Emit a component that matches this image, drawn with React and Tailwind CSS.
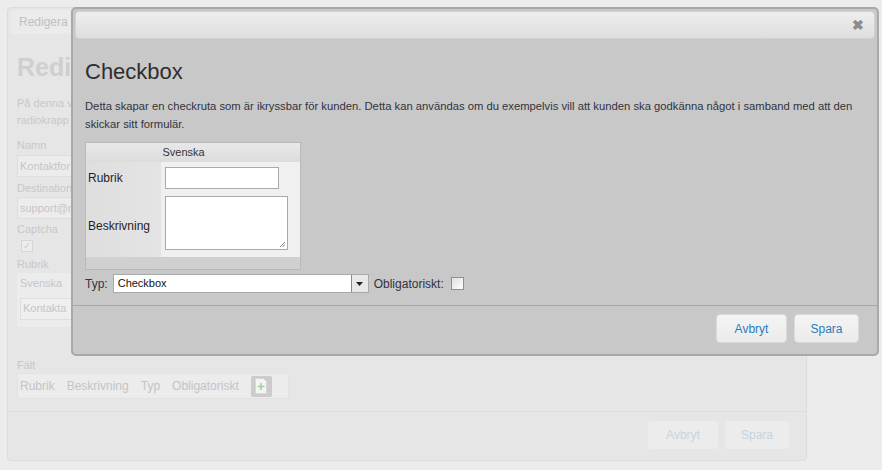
import React from "react";

const font = { fontFamily: '"Liberation Sans", Arial, sans-serif' };

function PlusDoc() {
  return (
    <svg width="12" height="16" viewBox="0 0 12 16">
      <path d="M0.5 0.5h8l3 3v12h-11z" fill="#f4f4f4" stroke="#d6d6d6" />
      <path d="M6 5v7M2.5 8.5h7" stroke="#9fd19f" strokeWidth="1.6" />
    </svg>
  );
}

const Background = () => (
  <div className="absolute left-[7px] top-[7px] w-[800px] h-[454px] bg-[#e6e6e6] border border-[#dcdcdc] rounded-[4px] flex flex-col">
    <div className="mx-[3px] mt-[2px] h-[24px] w-[62px] bg-[#ebebeb] rounded-[4px] px-[8px] flex items-center text-[12px] text-[#c0c0c0] whitespace-nowrap overflow-hidden">
      Redigera f
    </div>
    <div className="px-[9px] pt-[18px] flex flex-col">
      <h1 className="text-[25px] font-bold text-[#cfcfcf] leading-[30px] w-[56px] overflow-hidden whitespace-nowrap">Redig</h1>
      <p className="mt-[13px] text-[11px] leading-[17px] text-[#c8c8c8] w-[55px] overflow-hidden whitespace-nowrap">
        På denna v
        <br />
        radiokrapp
      </p>
      <div className="mt-[10px] text-[11px] text-[#c8c8c8] leading-[13px]">Namn</div>
      <div className="mt-[3px] w-[55px] h-[22px] bg-[#ececec] border border-[#dedede] px-[2px] flex items-center text-[11px] text-[#c6c6c6] overflow-hidden whitespace-nowrap">Kontaktfor</div>
      <div className="mt-[5px] text-[11px] text-[#c8c8c8] leading-[13px] w-[55px] overflow-hidden whitespace-nowrap">Destination</div>
      <div className="mt-[2px] w-[55px] h-[22px] bg-[#ececec] border border-[#dedede] px-[2px] flex items-center text-[11px] text-[#c6c6c6] overflow-hidden whitespace-nowrap">support@m</div>
      <div className="mt-[4px] text-[11px] text-[#c8c8c8] leading-[13px]">Captcha</div>
      <div className="mt-[4px] ml-[4px] w-[12px] h-[12px] border border-[#d6d6d6] bg-[#ececec] flex items-center justify-center text-[10px] leading-none text-[#d0d0d0]">✓</div>
      <div className="mt-[6px] text-[11px] text-[#c8c8c8] leading-[13px]">Rubrik</div>
      <div className="mt-[2px] w-[55px] h-[54px] bg-[#ececec] px-[3px] pt-[2px] text-[11px] text-[#c6c6c6]">
        <div>Svenska</div>
        <div className="mt-[6px] w-[52px] h-[22px] bg-[#efefef] border border-[#dedede] px-[2px] flex items-center overflow-hidden whitespace-nowrap">Kontakta</div>
      </div>
      <div className="mt-[32px] text-[11px] text-[#c8c8c8] leading-[13px]">Fält</div>
      <div className="mt-[1px] w-[272px] h-[26px] bg-[#ececec] border border-[#e2e2e2] flex items-center gap-[12px] px-[2px] text-[12px] text-[#c4c4c4]">
        <span>Rubrik</span>
        <span>Beskrivning</span>
        <span>Typ</span>
        <span>Obligatoriskt</span>
        <span className="w-[21px] h-[21px] bg-[#cccccc] rounded-[2px] flex items-center justify-center">
          <PlusDoc />
        </span>
      </div>
    </div>
    <div className="mt-[12px] border-t border-[#dedede]" />
    <div className="flex justify-end gap-[7px] pr-[17px] pt-[9px]">
      <div className="w-[70px] h-[28px] rounded-[4px] bg-[#ececec] flex items-center justify-center text-[12px] text-[#c6d4e2]">Avbryt</div>
      <div className="w-[64px] h-[28px] rounded-[4px] bg-[#ececec] flex items-center justify-center text-[12px] text-[#c6d4e2]">Spara</div>
    </div>
  </div>
);

const Modal = () => (
  <div className="absolute left-[71px] top-[7px] w-[808px] h-[349px] bg-[#c8c8c8] border-2 border-[#a9a9a9] rounded-[5px] flex flex-col">
    <div className="mx-[2px] mt-[2px] h-[28px] rounded-[4px] border border-[#d2d2d2] bg-gradient-to-b from-[#eeeeee] to-[#dedede] flex items-center justify-end pr-[10px]">
      <span className="text-[14px] font-bold text-[#8c8c8c] leading-none">✖</span>
    </div>
    <div className="px-[12px] flex flex-col text-[#33333d]">
      <h2 className="mt-[20px] text-[22px] leading-[26px] text-[#2e2e2e]">Checkbox</h2>
      <p className="mt-[12px] text-[11.25px] leading-[18px] w-[780px]">
        Detta skapar en checkruta som är ikryssbar för kunden. Detta kan användas om du exempelvis vill att kunden ska godkänna något i samband med att den skickar sitt formulär.
      </p>
      <table className="mt-[9px] w-[216px] border border-[#b9b9b9] border-collapse text-[11px]">
        <thead>
          <tr className="h-[19px] bg-gradient-to-b from-[#e8e8e8] to-[#dcdcdc]">
            <th className="w-[75px]"></th>
            <th className="text-left font-normal pl-[2px]">Svenska</th>
          </tr>
        </thead>
        <tbody>
          <tr className="h-[33px]">
            <td className="bg-gradient-to-r from-[#dedede] to-[#e4e4e4] text-[12px] pl-[2px] text-[#1f1f28]">Rubrik</td>
            <td className="bg-[#f0f0f0] pl-[4px]">
              <div className="w-[114px] h-[22px] bg-white border border-[#a9a9a9]" />
            </td>
          </tr>
          <tr className="h-[62px]">
            <td className="bg-gradient-to-r from-[#dedede] to-[#e4e4e4] text-[12px] pl-[2px] text-[#1f1f28]">Beskrivning</td>
            <td className="bg-[#f0f0f0] pl-[4px] align-top pt-[1px]">
              <div className="relative w-[123px] h-[54px] bg-white border border-[#a9a9a9]">
                <svg className="absolute right-[1px] bottom-[1px]" width="7" height="7" viewBox="0 0 7 7">
                  <path d="M6 1L1 6M6 3.5L3.5 6" stroke="#777" strokeWidth="0.9" />
                </svg>
              </div>
            </td>
          </tr>
          <tr className="h-[13px] bg-[#d0d0d0]">
            <td colSpan="2"></td>
          </tr>
        </tbody>
      </table>
      <div className="mt-[4px] flex items-center text-[12px]">
        <span className="text-[#33333d]">Typ:</span>
        <div className="ml-[5px] w-[256px] h-[19px] bg-white border border-[#a9a9a9] flex items-center text-[11px]">
          <span className="flex-1 pl-[4px] text-[#111]">Checkbox</span>
          <span className="w-[17px] h-[17px] bg-[#e8e8e8] border-l border-[#8a8a8a] flex items-center justify-center">
            <svg width="7" height="4" viewBox="0 0 7 4"><path d="M0 0h7L3.5 4z" fill="#222" /></svg>
          </span>
        </div>
        <span className="ml-[5px] text-[#33333d]">Obligatoriskt:</span>
        <span className="ml-[7px] w-[13px] h-[13px] bg-gradient-to-br from-[#e0e0e0] to-[#ffffff] border border-[#8f8f8f]" />
      </div>
    </div>
    <div className="mt-[12px] border-t border-[#a6a6a6] flex-1 flex justify-end items-start gap-[7px] pr-[18px] pt-[8px]">
      <div className="w-[71px] h-[29px] rounded-[4px] bg-gradient-to-b from-[#f4f4f4] to-[#ebebeb] border border-[#dadada] flex items-center justify-center text-[12px] text-[#2d7bbd]">Avbryt</div>
      <div className="w-[65px] h-[29px] rounded-[4px] bg-gradient-to-b from-[#f4f4f4] to-[#ebebeb] border border-[#dadada] flex items-center justify-center text-[12px] text-[#2d7bbd]">Spara</div>
    </div>
  </div>
);

export default function App() {
  return (
    <div className="relative w-[882px] h-[470px] bg-[#ececec] overflow-hidden" style={font}>
      <Background />
      <Modal />
    </div>
  );
}
